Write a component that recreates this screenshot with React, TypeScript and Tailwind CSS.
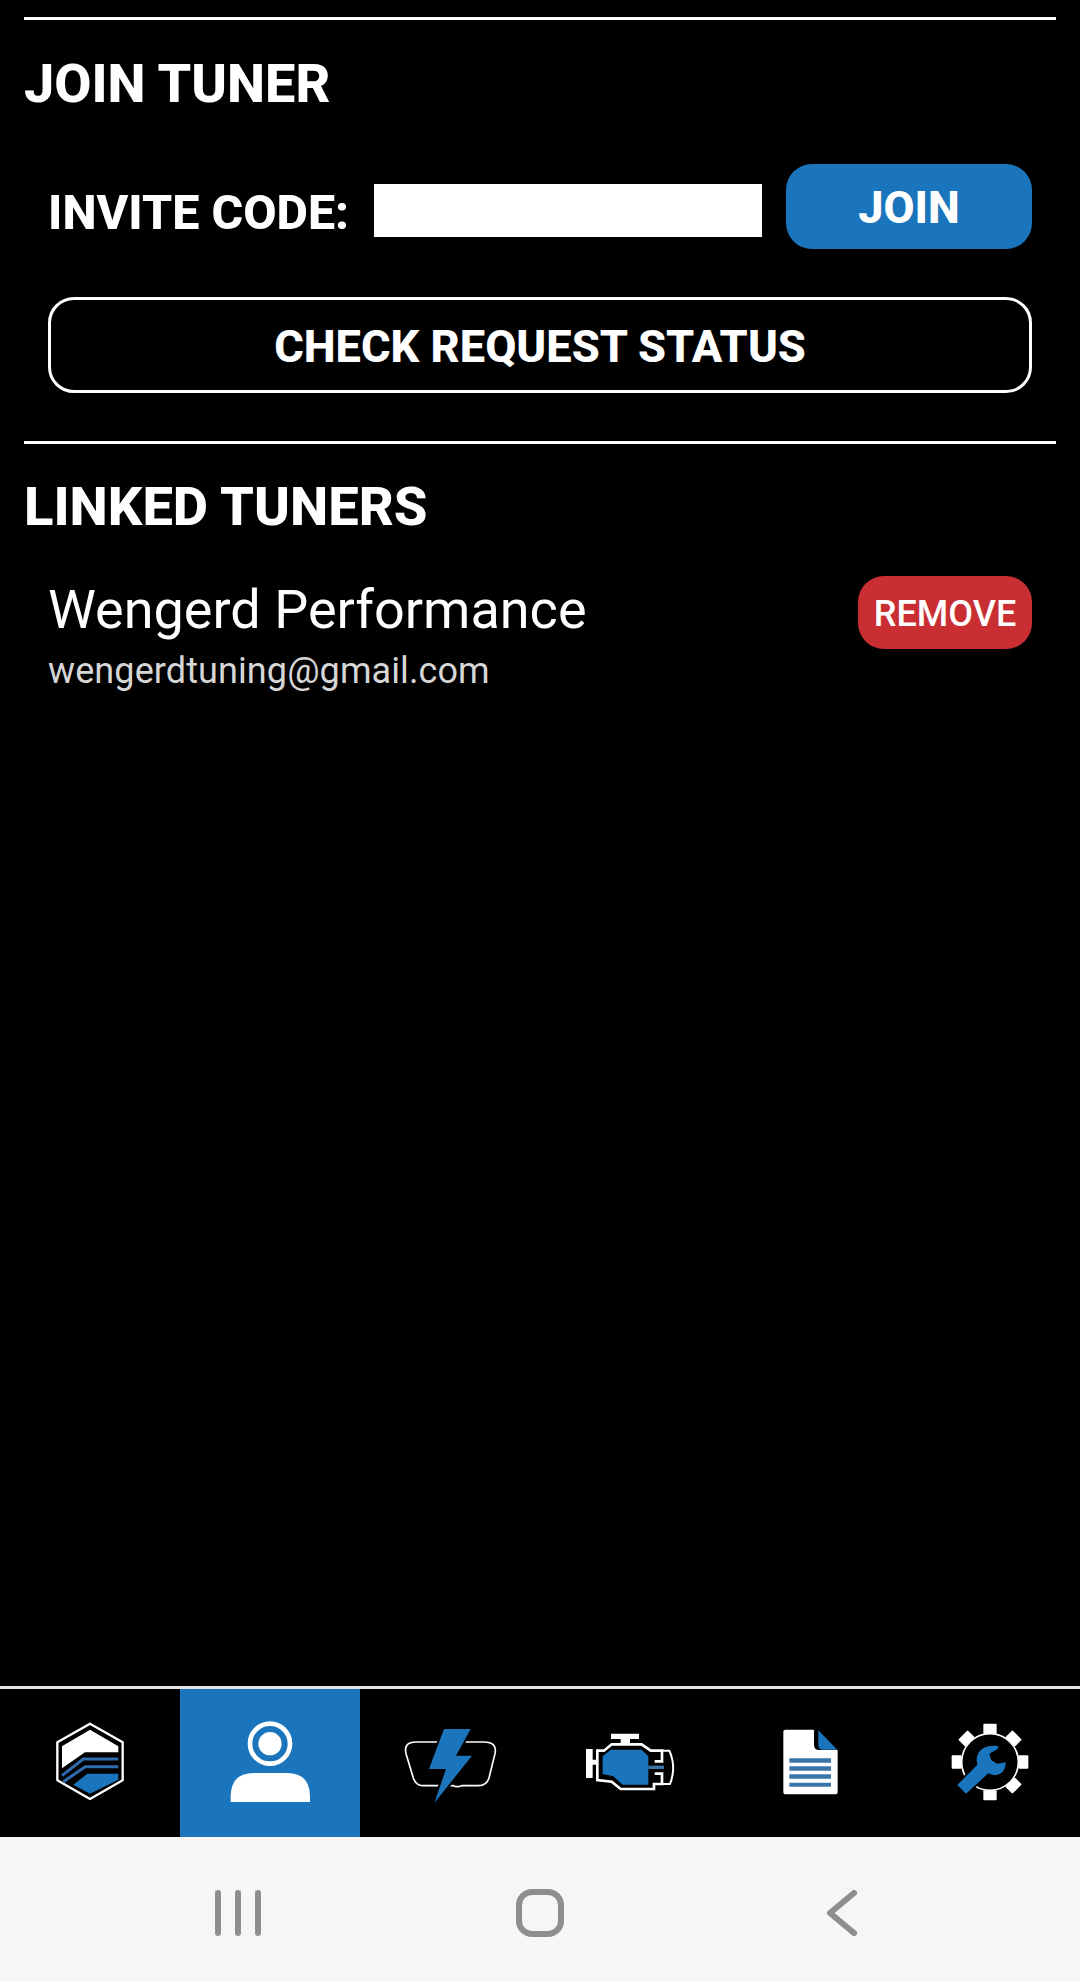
import React from 'react';

const BLUE = '#1b75bc';

// All tab icons share one box; the viewBox is centred on the middle of the tab.
const HomeIcon = () => (
  <svg viewBox="135 136 270 288" className="h-[96px] w-[90px]">
    <path d="M270 162 368 218V332L270 388 172 332V218Z" fill="none" stroke="#fff" strokeWidth="7" strokeLinejoin="round" />
    <path d="M270 180 355 230V248H255L186 296V230Z" fill="#fff" />
    <path d="M186 318 250 268H355M190 336 256 291H355" fill="none" stroke="#2f6cae" strokeWidth="9" />
    <path d="M220 345 262 312H355V330L270 372Z" fill={BLUE} />
  </svg>
);

const UserIcon = () => (
  <svg viewBox="675 136 270 288" className="h-[96px] w-[90px]">
    <circle cx="810" cy="222" r="60" fill="none" stroke="#fff" strokeWidth="14" />
    <circle cx="810" cy="222" r="35" fill="#fff" />
    <path d="M692 397V380Q692 310 762 310H860Q930 310 930 380V397Z" fill="#fff" />
  </svg>
);

const FlashIcon = () => (
  <svg viewBox="75 136 270 288" className="h-[96px] w-[90px]" overflow="visible">
    <path
      d="M108 217H312Q352 217 345 252L327 325Q320 348 295 348H245Q232 354 220 348H128Q108 348 100 325L78 252Q70 217 108 217Z"
      fill="none"
      stroke="#fff"
      strokeWidth="5"
    />
    <path d="M192 178H272L228 258H276L163 400 198 298H147Z" fill={BLUE} stroke="#000" strokeWidth="12" paintOrder="stroke" />
  </svg>
);

const EngineIcon = () => (
  <svg viewBox="615 136 270 288" className="h-[96px] w-[90px]" overflow="visible">
    <path d="M693 192H777V208H750V222H722V208H693Z" fill="#fff" />
    <path d="M618 238H638V270H650V285H638V325H618Z" fill="#fff" />
    <path
      d="M824 275H846V243H812L785 224H695L672 243H652V331L695 336 722 358H822V343H846V312H824"
      fill="none"
      stroke="#fff"
      strokeWidth="8"
    />
    <path d="M846 243H868Q890 293 870 343H846" fill="none" stroke="#fff" strokeWidth="6" />
    <path d="M668 260 692 240H785L805 260V345H728L700 320 668 313Z" fill={BLUE} />
    <path d="M805 288H852V298H805Z" fill="#3a75a8" />
  </svg>
);

const DocIcon = () => (
  <svg viewBox="135 136 270 288" className="h-[96px] w-[90px]">
    <path d="M190 186Q190 180 196 180H282V225Q282 241 298 241H353V366Q353 374 345 374H198Q190 374 190 366Z" fill="#fff" />
    <path d="M295 182 352 240H310Q295 240 295 225Z" fill={BLUE} />
    <path d="M208 266H333V279H208ZM208 290H333V303H208ZM208 314H333V327H208ZM208 339H333V351H208Z" fill="#3a75a8" />
  </svg>
);

const GearIcon = () => (
  <svg viewBox="675 136 270 288" className="h-[96px] w-[90px]">
    <circle cx="810" cy="277" r="85" fill="none" stroke="#fff" strokeWidth="5" />
    {[0, 45, 90, 135, 180, 225, 270, 315].map((deg) => (
      <rect key={deg} x="790" y="162" width="40" height="30" rx="3" fill="#fff" transform={`rotate(${deg} 810 277)`} />
    ))}
    <path
      d="M712 346 772 285C762 250 790 222 835 230L833 238 808 252 814 272 832 282 857 278C858 310 830 325 805 311L738 372Z"
      fill={BLUE}
      stroke="#000"
      strokeWidth="10"
      paintOrder="stroke"
    />
  </svg>
);

const tabs = [HomeIcon, UserIcon, FlashIcon, EngineIcon, DocIcon, GearIcon];

const App: React.FC = () => {
  return (
    <div className="flex h-[1981px] w-[1080px] flex-col bg-black font-['Roboto',sans-serif] text-white">
      <main className="flex-1 pt-[17px]">
        <div className="mx-6 h-[3px] bg-white" />
        <h2 className="mx-6 mt-[32px] text-[54px] leading-[64px] font-extrabold">JOIN TUNER</h2>

        <div className="mx-12 mt-[48px] flex h-[85px] items-start">
          <span className="mt-[13px] w-[326px] text-[48.4px] leading-[72px] font-extrabold">INVITE CODE:</span>
          <div className="mt-[20px] h-[53px] w-[388px] bg-white" />
          <button className="ml-auto h-[85px] w-[246px] rounded-[26px] bg-[#1b75bc] pt-[3px] text-[45px] font-extrabold text-white">JOIN</button>
        </div>

        <button className="mx-12 mt-[48px] block h-[96px] w-[984px] rounded-[26px] border-[3px] border-white pt-[3px] text-[45.2px] font-extrabold">
          CHECK REQUEST STATUS
        </button>

        <div className="mx-6 mt-[48px] h-[3px] bg-white" />
        <h2 className="mx-6 mt-[31px] text-[54.3px] leading-[64px] font-extrabold">LINKED TUNERS</h2>

        <div className="mx-12 mt-[37px] flex items-start justify-between">
          <div>
            <div className="pt-[1px] text-[54px] leading-[66px]">Wengerd Performance</div>
            <div className="mt-[6px] text-[36px] leading-[44px] tracking-[0.1px] text-[#d6d6d6]">wengerdtuning@gmail.com</div>
          </div>
          <button className="h-[73px] w-[174px] rounded-[26px] bg-[#c92e33] pt-[3px] text-[36px] font-medium text-white">REMOVE</button>
        </div>
      </main>

      <nav className="flex h-[151px] border-t-[3px] border-[#e4e4e4]">
        {tabs.map((Icon, i) => (
          <div key={i} className={`flex flex-1 items-center justify-center ${i === 1 ? 'bg-[#1b75bc]' : ''}`}>
            <Icon />
          </div>
        ))}
      </nav>

      <div className="flex h-[144px] items-center justify-center bg-[#f6f6f6] pt-[7px]">
        <div className="flex w-[302px] justify-center">
          <svg viewBox="0 0 50 46" className="h-[46px] w-[50px]">
            <path d="M5 3V43M25 3V43M45 3V43" stroke="#8e8e8e" strokeWidth="6" strokeLinecap="round" />
          </svg>
        </div>
        <div className="flex w-[302px] justify-center">
          <svg viewBox="0 0 50 48" className="h-[48px] w-[50px]">
            <rect x="4" y="3" width="42" height="42" rx="13" fill="none" stroke="#8e8e8e" strokeWidth="6" />
          </svg>
        </div>
        <div className="flex w-[302px] justify-center">
          <svg viewBox="0 0 32 46" className="h-[46px] w-[32px]">
            <path d="M28 3 4 23 28 43" fill="none" stroke="#8e8e8e" strokeWidth="6" strokeLinecap="round" strokeLinejoin="round" />
          </svg>
        </div>
      </div>
    </div>
  );
};

export default App;
